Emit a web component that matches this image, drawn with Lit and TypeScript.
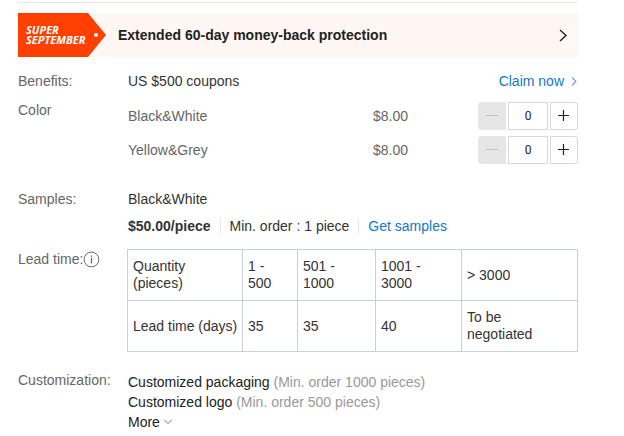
import { LitElement, html, css } from "lit";
import { customElement, property, state } from "lit/decorators.js";

@customElement("quantity-stepper")
class QuantityStepper extends LitElement {
  @property() label = "";
  @state() private value = 0;

  static styles = css`
    :host { display: flex; gap: 2px; }
    button, input {
      box-sizing: border-box;
      height: 28px;
      margin: 0;
      padding: 0;
      border: 1px solid #d8d8d8;
      background: #fff;
      color: #222;
    }
    button { width: 28px; display: flex; align-items: center; justify-content: center; }
    .minus { border-radius: 3px 0 0 3px; }
    .plus { border-radius: 0 3px 3px 0; }
    button:disabled { background: #e6e6e6; border-color: #e6e6e6; color: #c4c4c4; }
    input { width: 40px; text-align: center; font: 12px "Roboto", "Liberation Sans", sans-serif; }
    svg { display: block; flex: none; }
  `;

  render() {
    return html`
      <button class="minus" aria-label="Decrease ${this.label}" ?disabled=${this.value === 0}
        @click=${() => { this.value -= 1; }}>
        <svg width="14" height="14" viewBox="0 0 14 14"><path d="M1 6.5H13" stroke="currentColor" /></svg>
      </button>
      <input type="text" aria-label="Quantity of ${this.label}" .value=${String(this.value)}
        @change=${(e: Event) => { this.value = Math.max(0, Number((e.target as HTMLInputElement).value) || 0); }} />
      <button class="plus" aria-label="Increase ${this.label}" @click=${() => { this.value += 1; }}>
        <svg width="14" height="14" viewBox="0 0 14 14"><path d="M1 6.5H12M6.5 1V12" stroke="currentColor" stroke-width="1.2" /></svg>
      </button>
    `;
  }
}

@customElement("app-root")
class AppRoot extends LitElement {
  private colors = [
    { name: "Black&White", price: "$8.00" },
    { name: "Yellow&Grey", price: "$8.00" },
  ];
  private leadTimes = [
    { quantity: "1 - 500", days: "35", width: "col-s" },
    { quantity: "501 - 1000", days: "35", width: "col-m" },
    { quantity: "1001 - 3000", days: "40", width: "col-l" },
    { quantity: "> 3000", days: "To be negotiated", width: "" },
  ];
  private customizations = [
    { name: "Customized packaging", min: "(Min. order 1000 pieces)" },
    { name: "Customized logo", min: "(Min. order 500 pieces)" },
  ];

  static styles = css`
    :host {
      display: block;
      padding: 2px 46px 4px 18px;
      background: #fff;
      color: #333;
      font: 14px/20px "Liberation Sans", Arial, sans-serif;
    }
    a { color: #1477cc; text-decoration: none; }
    svg { display: block; flex: none; }
    .banner {
      display: flex;
      align-items: center;
      height: 44px;
      margin-top: 10px;
      padding-right: 10px;
      background: #fff7f4;
      color: #222;
    }
    .rule { border-top: 1px solid #e6e7eb; }
    .flag {
      display: flex;
      align-items: center;
      box-sizing: border-box;
      width: 88px;
      height: 44px;
      padding-left: 8px;
      gap: 6px;
      background: #ff4000;
      clip-path: polygon(0 0, 70px 0, 88px 50%, 70px 100%, 0 100%);
      color: #fff;
      font: italic 700 11px/10px "Open Sans", "Noto Sans", sans-serif;
    }
    .flag span { width: 62px; }
    .dot { width: 4px; height: 4px; border-radius: 50%; background: #fff; }
    .title { flex: 1; margin-left: 12px; font-weight: bold; }
    .row { display: grid; grid-template-columns: 110px 1fr; }
    .label { color: #666; }
    .benefits { margin-top: 14px; }
    .split { display: flex; justify-content: space-between; }
    .claim { display: flex; align-items: center; gap: 7px; }
    .colors { margin-top: 9px; }
    .options { display: grid; gap: 6px; padding-top: 2px; }
    .option {
      display: grid;
      grid-template-columns: 245px 1fr auto;
      align-items: center;
      color: #666;
    }
    .samples { margin-top: 25px; }
    .sample-info { display: flex; align-items: center; margin-top: 9px; }
    .sample-info > * { line-height: 16px; }
    .sample-info > * + * { margin-left: 9px; padding-left: 9px; border-left: 1px solid #e6e7eb; }
    .lead { margin-top: 15px; }
    .lead .label { display: flex; align-items: center; height: 20px; }
    table { width: calc(100% + 1px); margin-left: -1px; border-collapse: collapse; table-layout: fixed; line-height: 17px; }
    th, td {
      box-sizing: border-box;
      height: 51px;
      padding: 0 5px;
      border: 1px solid #c5d0de;
      text-align: left;
      font-weight: normal;
    }
    th { white-space: nowrap; }
    .head { width: 115px; }
    .col-s { width: 55px; }
    .col-m { width: 78px; }
    .col-l { width: 86px; }
    .short { display: block; width: 64px; white-space: normal; }
    .narrow { display: block; width: 40px; }
    .custom { margin-top: 18px; }
    .custom .values { padding-top: 2px; color: #222; }
    .min { color: #999; }
    .more {
      display: flex;
      align-items: center;
      gap: 4px;
      margin: 0;
      padding: 0;
      border: 0;
      background: none;
      color: inherit;
      font: inherit;
    }
  `;

  render() {
    return html`
      <div class="rule"></div>
      <div class="banner">
        <div class="flag"><span>SUPER SEPTEMBER</span><i class="dot"></i></div>
        <div class="title">Extended 60-day money-back protection</div>
        <svg width="10" height="14" viewBox="0 0 10 14" fill="none"><path d="M2 2L8 7.5L2 13" stroke="#222" stroke-width="1.4" /></svg>
      </div>

      <div class="row benefits">
        <div class="label">Benefits:</div>
        <div class="split">
          <span>US $500 coupons</span>
          <a class="claim" href="#">Claim now
            <svg width="7" height="10" viewBox="0 0 7 10" fill="none"><path d="M1 1.5L5 5.5L1 9.5" stroke="#7f9fce" stroke-width="1.2" /></svg>
          </a>
        </div>
      </div>

      <div class="row colors">
        <div class="label">Color</div>
        <div class="options">
          ${this.colors.map((c) => html`
            <div class="option">
              <span>${c.name}</span><span>${c.price}</span>
              <quantity-stepper .label=${c.name}></quantity-stepper>
            </div>`)}
        </div>
      </div>

      <div class="row samples">
        <div class="label">Samples:</div>
        <div>
          <div>Black&amp;White</div>
          <div class="sample-info">
            <b>$50.00/piece</b><span>Min. order : 1 piece</span><a href="#">Get samples</a>
          </div>
        </div>
      </div>

      <div class="row lead">
        <div class="label">Lead time:
          <svg width="17" height="17" viewBox="0 0 17 17" fill="none" stroke="#666">
            <circle cx="8.5" cy="8.5" r="7.4" /><path d="M8.5 7V12.5M8.5 4.5V6" stroke-width="1.2" />
          </svg>
        </div>
        <table>
          <tr>
            <th class="head" scope="row"><span class="short">Quantity (pieces)</span></th>
            ${this.leadTimes.map((t) => html`<td class=${t.width}>${t.width ? html`<span class="narrow">${t.quantity}</span>` : t.quantity}</td>`)}
          </tr>
          <tr>
            <th scope="row">Lead time (days)</th>
            ${this.leadTimes.map((t) => html`<td>${t.width ? t.days : html`<span class="short">${t.days}</span>`}</td>`)}
          </tr>
        </table>
      </div>

      <div class="row custom">
        <div class="label">Customization:</div>
        <div class="values">
          ${this.customizations.map((c) => html`<div>${c.name} <span class="min">${c.min}</span></div>`)}
          <button class="more">More
            <svg width="8" height="6" viewBox="0 0 8 6" fill="none"><path d="M0.5 1L4 4.5L7.5 1" stroke="#666" /></svg>
          </button>
        </div>
      </div>
    `;
  }
}
